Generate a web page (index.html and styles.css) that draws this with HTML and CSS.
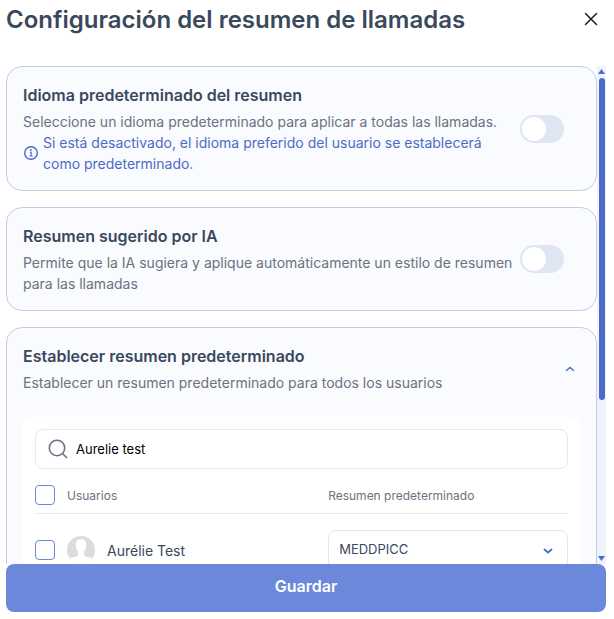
FILE: index.html
```html
<!DOCTYPE html>
<html lang="es">
<head>
	<meta charset="utf-8">
	<meta name="viewport" content="width=device-width, initial-scale=1.0">
	<title>Configuración del resumen de llamadas</title>
	<link rel="stylesheet" href="styles.css">
</head>
<body>
	<div class="dialog">
		<header class="dialog-header">
			<h1 class="dialog-title">Configuración del resumen de llamadas</h1>
			<button class="close-btn" type="button" aria-label="Cerrar">
				<svg width="14" height="14" viewBox="0 0 14 14" fill="none" stroke="#1d1d1f" stroke-width="1.5" stroke-linecap="round">
					<path d="M1.5 1.5l11 11M12.5 1.5l-11 11" />
				</svg>
			</button>
		</header>

		<div class="dialog-body">
			<div class="cards">
				<section class="card">
					<div class="card-row">
						<div class="card-text">
							<h2 class="card-title"><label for="idioma">Idioma predeterminado del resumen</label></h2>
							<p class="card-desc">Seleccione un idioma predeterminado para aplicar a todas las llamadas.</p>
							<div class="note">
								<svg width="16" height="16" viewBox="0 0 16 16" fill="none" stroke="#4b6bc5">
									<circle cx="8" cy="8" r="6.3" stroke-width="1.4" />
									<path d="M6.7 7.3H8.2V11M6.5 11h3.2" stroke-width="1.1" />
									<circle cx="8" cy="5" r="0.9" fill="#4b6bc5" stroke="none" />
								</svg>
								<p>Si está desactivado, el idioma preferido del usuario se establecerá como predeterminado.</p>
							</div>
						</div>
						<input id="idioma" class="toggle" type="checkbox" role="switch">
					</div>
				</section>

				<section class="card">
					<div class="card-row">
						<div class="card-text">
							<h2 class="card-title"><label for="sugerido">Resumen sugerido por IA</label></h2>
							<p class="card-desc">Permite que la IA sugiera y aplique automáticamente un estilo de resumen para las llamadas</p>
						</div>
						<input id="sugerido" class="toggle" type="checkbox" role="switch">
					</div>
				</section>

				<section class="card">
					<div class="card-row">
						<div class="card-text">
							<h2 class="card-title">Establecer resumen predeterminado</h2>
							<p class="card-desc">Establecer un resumen predeterminado para todos los usuarios</p>
						</div>
						<button class="collapse-btn" type="button" aria-label="Contraer" aria-expanded="true">
							<svg width="10" height="6" viewBox="0 0 10 6" fill="none" stroke="#4b6bc5" stroke-width="1.4" stroke-linecap="round">
								<path d="M1.5 4.5L5 1.5l3.5 3" />
							</svg>
						</button>
					</div>

					<div class="panel">
						<div class="search">
							<svg width="20" height="20" viewBox="0 0 20 20" fill="none" stroke="#6b7280" stroke-width="1.6" stroke-linecap="round">
								<circle cx="9" cy="9" r="7.7" />
								<path d="M14.5 14.5l4 4" />
							</svg>
							<input class="search-input" type="text" value="Aurelie test" aria-label="Buscar usuarios">
						</div>

						<table class="users">
							<thead>
								<tr>
									<th class="col-user">
										<div class="cell">
											<input id="todos" class="check" type="checkbox">
											<label for="todos">Usuarios</label>
										</div>
									</th>
									<th>Resumen predeterminado</th>
								</tr>
							</thead>
							<tbody>
								<tr>
									<td>
										<div class="cell">
											<input id="usuario1" class="check" type="checkbox">
											<label class="user" for="usuario1">
												<svg width="28" height="28" viewBox="0 0 28 28">
													<defs>
														<clipPath id="avatar"><circle cx="14" cy="14" r="14" /></clipPath>
													</defs>
													<g clip-path="url(#avatar)">
														<rect width="28" height="28" fill="#dcdcdc" />
														<path d="M14 3c3.400 0 5.300 2.200 5.300 5.700 0 2.800-.8 5.100-2 6.600-.6 1-.5 3.900.3 4.600 1.700 1.100 6.400 1.500 10.400 3.100V28H0v-5c4-1.600 8.700-2 10.400-3.100.8-.7.9-3.600.3-4.600-1.200-1.500-2-3.800-2-6.600C8.700 5.200 10.600 3 14 3z" fill="#fff" />
													</g>
												</svg>
												<span>Aurélie Test</span>
											</label>
										</div>
									</td>
									<td>
										<div class="select-wrap">
											<select class="select" aria-label="Resumen predeterminado de Aurélie Test">
												<option>MEDDPICC</option>
											</select>
											<svg class="select-arrow" width="10" height="6" viewBox="0 0 10 6" fill="none" stroke="#4b6bc5" stroke-width="1.8" stroke-linecap="round">
												<path d="M1.5 1.5L5 4.5l3.5-3" />
											</svg>
										</div>
									</td>
								</tr>
							</tbody>
						</table>
					</div>
				</section>
			</div>

			<!-- barra de desplazamiento -->
			<div class="scrollbar" aria-hidden="true">
				<svg width="7" height="5" viewBox="0 0 7 5" fill="#4b6bc5"><path d="M3.5 0L7 5H0z" /></svg>
				<div class="scroll-track"><div class="scroll-thumb"></div></div>
				<svg width="7" height="5" viewBox="0 0 7 5" fill="#4b6bc5"><path d="M0 0h7L3.5 5z" /></svg>
			</div>
		</div>

		<button class="save-btn" type="button">Guardar</button>
	</div>
</body>
</html>
```
FILE: styles.css
```css
* {
	box-sizing: border-box;
}

body {
	margin: 0;
	background: #fff;
	color: #3a485c;
	font-family: Inter, "Liberation Sans", sans-serif;
	font-size: 14px;
	line-height: 21px;
}

h1, h2, p {
	margin: 0;
}

button, input, select {
	margin: 0;
	font-family: inherit;
}

svg {
	display: block;
	flex: none;
}

.dialog {
	display: flex;
	flex-direction: column;
	height: 100vh;
	padding: 0 8px 7px 6px;
}

.dialog-header {
	display: flex;
	justify-content: space-between;
	align-items: flex-start;
	height: 66px;
	padding-top: 4px;
}

.dialog-title {
	font-size: 24px;
	font-weight: 600;
	line-height: 32px;
}

.close-btn {
	padding: 8px;
	border: 0;
	background: none;
}

.dialog-body {
	display: flex;
	flex: 1;
	min-height: 0;
	overflow: hidden;
}

.cards {
	display: flex;
	flex: 1;
	flex-direction: column;
	gap: 16px;
	min-width: 0;
}

.card {
	flex: none;
	padding: 16px;
	border: 1px solid #c3cde8;
	border-radius: 16px;
	background: #fafbff;
}

.card-row {
	display: flex;
	align-items: center;
	gap: 4px;
}

.card-text {
	flex: 1;
}

.card-title {
	margin-bottom: 4px;
	font-size: 16px;
	font-weight: 600;
	line-height: 24px;
}

.card-desc {
	color: #6b7280;
}

.note {
	display: flex;
	align-items: center;
	gap: 4px;
	color: #4b6bc5;
}

.toggle {
	appearance: none;
	flex: none;
	width: 44px;
	height: 28px;
	margin-right: 16px;
	padding: 2px;
	border-radius: 14px;
	background: #dfe5f3;
}

.toggle::before {
	content: "";
	display: block;
	width: 24px;
	height: 24px;
	border-radius: 50%;
	background: #fff;
}

.toggle:checked {
	padding-left: 18px;
	background: #6b88db;
}

.collapse-btn {
	padding: 5px;
	border: 0;
	background: none;
}

.panel {
	margin-top: 24px;
	padding: 12px;
	border-radius: 8px;
	background: #fff;
}

.search {
	display: flex;
	align-items: center;
	gap: 8px;
	height: 40px;
	padding: 0 12px;
	border: 1px solid #e6e8f2;
	border-radius: 8px;
}

.search-input {
	flex: 1;
	min-width: 0;
	padding: 0;
	border: 0;
	outline: 0;
	background: none;
	color: #000;
	font-size: 13px;
}

.users {
	width: 100%;
	margin-top: 8px;
	border-collapse: separate;
	border-spacing: 0;
	table-layout: fixed;
}

.users th {
	height: 37px;
	padding: 0;
	border-bottom: 1px solid #e8e9ee;
	color: #6b7280;
	font-size: 12px;
	font-weight: 400;
	text-align: left;
}

.users td {
	padding: 16px 0;
}

.col-user {
	width: 55%;
}

.cell {
	display: flex;
	align-items: center;
	gap: 12px;
}

.check {
	appearance: none;
	width: 20px;
	height: 20px;
	border: 1px solid #6b88db;
	border-radius: 4px;
	background: #fff;
}

.check:checked {
	background: #6b88db;
}

.user {
	display: flex;
	align-items: center;
	gap: 12px;
}

.select-wrap {
	position: relative;
}

.select {
	appearance: none;
	display: block;
	width: 100%;
	height: 40px;
	padding: 0 32px 2px 10px;
	border: 1px solid #dfe5f3;
	border-radius: 8px;
	background: #fff;
	color: #3a485c;
	font-size: 13px;
}

.select-arrow {
	position: absolute;
	top: 18px;
	right: 15px;
	pointer-events: none;
}

.scrollbar {
	display: flex;
	flex-direction: column;
	align-items: center;
	gap: 4px;
	width: 9px;
	padding: 3px 0;
	background: #f0f3fc;
}

.scroll-track {
	flex: 1;
}

.scroll-thumb {
	width: 6px;
	height: 68%;
	border-radius: 3px;
	background: #4b6bc5;
}

.save-btn {
	flex: none;
	height: 48px;
	padding: 0 0 4px;
	border: 0;
	border-radius: 8px;
	background: #6b88db;
	color: #fff;
	font-size: 16px;
	font-weight: 600;
}
```
